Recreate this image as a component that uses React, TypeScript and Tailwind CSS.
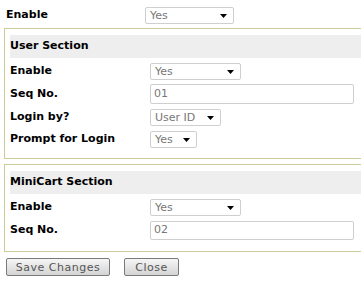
import React from 'react';

function Select({ value, width }: { value: string; width: string }) {
  return (
    <div
      className={`${width} h-[17px] border border-[#cfcfcf] rounded-[2px] bg-white flex items-center justify-between pl-[4px] pr-[6px] text-[#777]`}
    >
      <span className="leading-none">{value}</span>
      <svg width="7" height="4" viewBox="0 0 7 4">
        <path d="M0 0H7L3.5 4Z" fill="#000" />
      </svg>
    </div>
  );
}

function TextInput({ value, height }: { value: string; height: string }) {
  return (
    <div
      className={`w-[204px] ${height} border border-[#cfcfcf] rounded-[2px] bg-white flex items-center pl-[3px] text-[#777]`}
    >
      {value}
    </div>
  );
}

function Row({ label, children, className }: { label: string; children: React.ReactNode; className: string }) {
  return (
    <div className={`flex items-center ${className}`}>
      <div className="w-[140px] font-bold text-black">{label}</div>
      {children}
    </div>
  );
}

function Section({ title, children, className }: { title: string; children: React.ReactNode; className: string }) {
  return (
    <div className={`ml-[4px] w-[400px] border border-r-0 border-[#cccc99] pl-[5px] ${className}`}>
      <div className="h-[23px] bg-[#eeeeee] flex items-center font-bold text-black">{title}</div>
      {children}
    </div>
  );
}

export default function App() {
  return (
    <div className="w-[361px] h-[281px] overflow-hidden bg-white font-['DejaVu_Sans',sans-serif] text-[11px] pt-[7px]">
      <div className="flex items-center pl-[6px]">
        <div className="w-[139px] font-bold text-black">Enable</div>
        <Select value="Yes" width="w-[89px]" />
      </div>

      <Section title="User Section" className="mt-[4px] pt-[6px] pb-[10px]">
        <Row label="Enable" className="mt-[5px]">
          <Select value="Yes" width="w-[91px]" />
        </Row>
        <Row label="Seq No." className="mt-[4px]">
          <TextInput value="01" height="h-[20px]" />
        </Row>
        <Row label="Login by?" className="mt-[5px]">
          <Select value="User ID" width="w-[71px]" />
        </Row>
        <Row label="Prompt for Login" className="mt-[5px]">
          <Select value="Yes" width="w-[47px]" />
        </Row>
      </Section>

      <Section title="MiniCart Section" className="mt-[5px] pt-[6px] pb-[11px]">
        <Row label="Enable" className="mt-[5px]">
          <Select value="Yes" width="w-[91px]" />
        </Row>
        <Row label="Seq No." className="mt-[5px]">
          <TextInput value="02" height="h-[19px]" />
        </Row>
      </Section>

      <div className="flex gap-[14px] pl-[6px] mt-[6px]">
        <button className="w-[104px] h-[18px] border border-[#7a7a7a] rounded-[2px] bg-gradient-to-b from-[#f6f6f6] to-[#d4d4d4] text-[#555] leading-none tracking-[0.5px]">
          Save Changes
        </button>
        <button className="w-[55px] h-[18px] border border-[#7a7a7a] rounded-[2px] bg-gradient-to-b from-[#f6f6f6] to-[#d4d4d4] text-[#555] leading-none tracking-[0.5px]">
          Close
        </button>
      </div>
    </div>
  );
}
